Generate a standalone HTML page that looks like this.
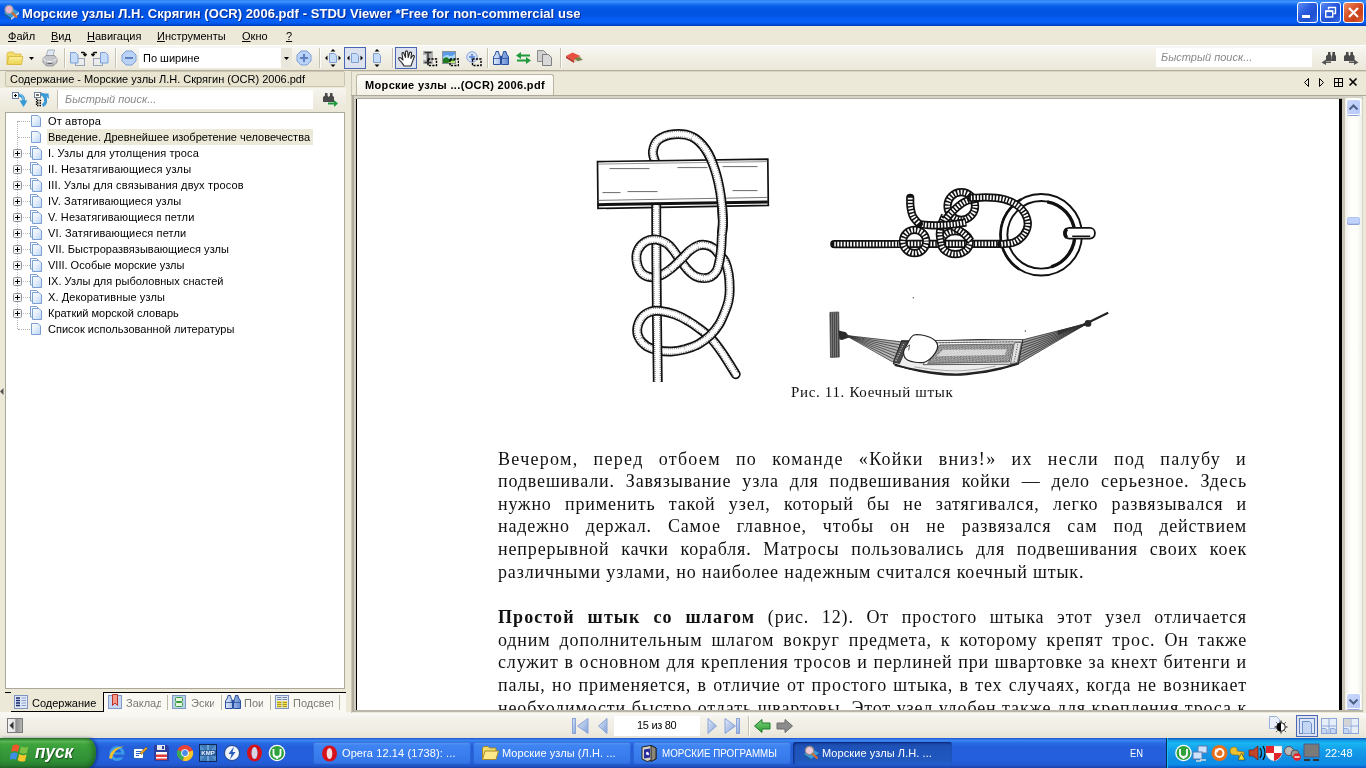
<!DOCTYPE html>
<html lang="ru">
<head>
<meta charset="utf-8">
<title>Морские узлы Л.Н. Скрягин (OCR) 2006.pdf - STDU Viewer</title>
<style>
html,body{margin:0;padding:0;}
body{will-change:transform;width:1366px;height:768px;overflow:hidden;position:relative;background:#ece9d8;font-family:"Liberation Sans",sans-serif;font-size:11px;color:#000;}
.abs{position:absolute;}
.t{position:absolute;white-space:nowrap;line-height:14px;transform-origin:0 50%;}
/* title bar */
#titlebar{left:0;top:0;width:1366px;height:26px;background:linear-gradient(to bottom,#2d7df2 0%,#3f93ff 6%,#2a80f8 12%,#0f66ee 20%,#0458e6 30%,#0052e0 52%,#0459ee 68%,#0862f8 80%,#055cf0 88%,#0148d2 95%,#003cbe 100%);}
#titletext{left:22px;top:6px;letter-spacing:.05px;color:#fff;font-weight:bold;font-size:13px;line-height:16px;text-shadow:1px 1px 0 #0a2a8c;}
.capbtn{position:absolute;top:2px;width:21px;height:21px;border-radius:3px;border:1px solid #fff;box-sizing:border-box;}
/* menu */
#menubar{left:0;top:26px;width:1366px;height:19px;background:#ece9d8;}
.menu{top:29px;}
.menu u{text-decoration:underline;}
/* toolbar */
#toolbar{left:0;top:45px;width:1366px;height:26px;box-sizing:border-box;border-top:1px solid #fff;border-bottom:1px solid #b3af9c;background:linear-gradient(to bottom,#f8f7f2 0%,#f1efe5 50%,#ebe8da 100%);}
.sep{position:absolute;width:1px;background:#c5c2b2;border-right:1px solid #fff;}
.sbtn{width:13px;height:14px;border-radius:2px;background:linear-gradient(to bottom right,#cbd8fc,#b7c8f7);box-shadow:0 0 0 1px #fff, 0 2px 0 #8fa4da;}
#page{font-family:"Liberation Serif",serif;color:#111;}
.ln{position:absolute;left:141px;width:749px;height:22px;line-height:22px;font-size:18px;letter-spacing:.85px;white-space:nowrap;text-align:justify;text-align-last:justify;}
.ln b{letter-spacing:1.1px}
.ln.last{text-align-last:left;width:auto;}
.cap{position:absolute;font-size:15px;line-height:18px;letter-spacing:.66px;white-space:nowrap;}
.tb{top:742px;height:23px;border-radius:3px;background:linear-gradient(to bottom,#5a9bfa 0%,#3f84f2 15%,#3a7eef 50%,#3577e8 85%,#2d6ad8 100%);box-shadow:inset 0 0 0 1px rgba(20,60,170,.35);}
.tb.act{background:linear-gradient(to bottom,#1848a8 0%,#1e52b7 20%,#2058c0 80%,#2460cc 100%);box-shadow:inset 1px 1px 2px rgba(0,10,80,.6);}
.tbt{top:746px;color:#fff;}
/* taskbar */
#taskbar{left:0;top:738px;width:1366px;height:30px;background:linear-gradient(to bottom,#1f55d0 0%,#3b86f0 8%,#2a6de6 16%,#245edb 30%,#2460de 70%,#2259d0 90%,#1a42a8 100%);}
</style>
</head>
<body>
<svg width="0" height="0" style="position:absolute"><defs><linearGradient id="pg" x1="0" y1="0" x2="1" y2="1"><stop offset="0" stop-color="#ffffff"/><stop offset=".45" stop-color="#e4effc"/><stop offset="1" stop-color="#b9d4f4"/></linearGradient></defs></svg>
<!-- TITLE BAR -->
<div id="titlebar" class="abs"></div>
<div id="titletext" class="t">Морские узлы Л.Н. Скрягин (OCR) 2006.pdf - STDU Viewer *Free for non-commercial use</div>

<!-- caption buttons + app icon -->
<svg class="abs" style="left:3px;top:4px" width="17" height="17" viewBox="0 0 17 17"><path d="M1 9l8-5 7 4-8 6z" fill="#3a9ad8"/><path d="M1 9v2l7 5v-2z" fill="#1f5f9a"/><path d="M8 14v2l8-6V8z" fill="#c8d8e8"/><circle cx="6" cy="5.500" r="4" fill="#e8b8d0" stroke="#999" stroke-width="1.200"/><path d="M9 8.500l5 5" stroke="#d86a2a" stroke-width="2.200"/></svg>
<div class="capbtn" style="left:1297px;background:linear-gradient(135deg,#5f8ff5 0%,#2a5ce0 40%,#1f4fd0 70%,#3a6fe8 100%)"></div>
<div class="abs" style="left:1302px;top:15px;width:8px;height:3px;background:#fff"></div>
<div class="capbtn" style="left:1320px;background:linear-gradient(135deg,#5f8ff5 0%,#2a5ce0 40%,#1f4fd0 70%,#3a6fe8 100%)"></div>
<svg class="abs" style="left:1324px;top:6px" width="13" height="13" viewBox="0 0 13 13"><path d="M4.500 3.500v-2h7v6h-2" fill="none" stroke="#fff" stroke-width="1.400"/><rect x="1.700" y="5" width="7" height="6" fill="none" stroke="#fff" stroke-width="1.400"/><path d="M1.700 5.300h7" stroke="#fff" stroke-width="1.600"/></svg>
<div class="capbtn" style="left:1343px;background:linear-gradient(135deg,#f0906a 0%,#d8552a 40%,#c8401a 70%,#e06a3a 100%)"></div>
<svg class="abs" style="left:1348px;top:7px" width="11" height="11" viewBox="0 0 11 11"><path d="M1 1l9 9M10 1l-9 9" stroke="#fff" stroke-width="2.100"/></svg>
<!-- MENU BAR -->
<div id="menubar" class="abs"></div>
<div class="t menu" style="left:8px"><u>Ф</u>айл</div>
<div class="t menu" style="left:51px"><u>В</u>ид</div>
<div class="t menu" style="left:87px"><u>Н</u>авигация</div>
<div class="t menu" style="left:157px"><u>И</u>нструменты</div>
<div class="t menu" style="left:242px"><u>О</u>кно</div>
<div class="t menu" style="left:286px"><u>?</u></div>
<!-- TOOLBAR -->
<div id="toolbar" class="abs"></div>

<!-- toolbar icons -->
<svg class="abs" style="left:6px;top:51px" width="18" height="15" viewBox="0 0 18 15"><defs><linearGradient id="fg" x1="0" y1="0" x2="0" y2="1"><stop offset="0" stop-color="#fbf0a0"/><stop offset="1" stop-color="#ecd24c"/></linearGradient></defs><path d="M1 13.500V3.500Q1 1 3.500 1h3Q8 1 8.500 3h6.500v3" fill="#f2dc6c" stroke="#dcc04a" stroke-width=".9"/><path d="M1 13.500L2.800 5.500h14L15.500 13.500z" fill="url(#fg)" stroke="#d8b93c" stroke-width=".9"/></svg>
<svg class="abs" style="left:29px;top:57px" width="5" height="3" viewBox="0 0 5 3"><path d="M0 0h5L2.500 3z" fill="#000"/></svg>
<svg class="abs" style="left:42px;top:49px" width="16" height="18" viewBox="0 0 16 18"><path d="M4 7.500L6 1h6.500L11 7.500z" fill="#dfe8f4" stroke="#9aa4b4" stroke-width=".8"/><path d="M1 9.500L4 6.500h8.500l2.500 3v4l-4 3.500H4.500L1 13.500z" fill="#c4c6ca" stroke="#8a8c90" stroke-width=".8"/><path d="M1 9.500l3.500 3H11l4-3" fill="none" stroke="#f4f4f4" stroke-width="1"/><path d="M4.500 12.500V17M11 12.500V17" stroke="#8a8c90" stroke-width=".7"/><path d="M5.500 14.500h4.500" stroke="#666" stroke-width="1.200"/></svg>
<div class="sep" style="left:64px;top:48px;height:20px"></div>
<svg class="abs" style="left:69px;top:51px" width="18" height="16" viewBox="0 0 18 16"><rect x="6.500" y="7.500" width="9" height="7" fill="#ececec" stroke="#9aa4b8"/><path d="M1.500 1.500h5l2.500 2.500v8h-7.500z" fill="#c6dcf8" stroke="#7b9fd8"/><path d="M12 1.500h2.500q1.500 0 1.500 1.500v1.500M14.300 3l1.700 1.800 1.700-1.800" fill="none" stroke="#111" stroke-width="1.300"/></svg>
<svg class="abs" style="left:91px;top:51px" width="18" height="16" viewBox="0 0 18 16"><rect x="2.500" y="7.500" width="9" height="7" fill="#ececec" stroke="#9aa4b8"/><path d="M9.500 1.500h5l2.500 2.500v8h-7.500z" fill="#c6dcf8" stroke="#7b9fd8"/><path d="M6 1.500H3.500Q2 1.500 2 3v1.500M3.700 3L2 4.800.3 3" fill="none" stroke="#111" stroke-width="1.300"/></svg>
<div class="sep" style="left:115px;top:48px;height:20px"></div>
<svg class="abs" style="left:121px;top:50px" width="16" height="16" viewBox="0 0 16 16"><path d="M5 1h6l4 4v6l-4 4H5l-4-4V5z" fill="#b9d2f6" stroke="#7d9fd6"/><rect x="4" y="7" width="8" height="2" fill="#5c80c0"/></svg>
<div class="abs" style="left:139px;top:48px;width:142px;height:20px;background:#fff"></div>
<div class="abs" style="left:281px;top:48px;width:11px;height:20px;background:#e9e7dc"></div>
<div class="t" style="left:143px;top:51px">По ширине</div>
<svg class="abs" style="left:284px;top:57px" width="5" height="3" viewBox="0 0 5 3"><path d="M0 0h5L2.500 3z" fill="#000"/></svg>
<svg class="abs" style="left:296px;top:50px" width="16" height="16" viewBox="0 0 16 16"><path d="M5 1h6l4 4v6l-4 4H5l-4-4V5z" fill="#b9d2f6" stroke="#7d9fd6"/><path d="M4 8h8M8 4v8" stroke="#5c80c0" stroke-width="2"/></svg>
<div class="sep" style="left:319px;top:48px;height:20px"></div>
<svg class="abs" style="left:325px;top:49px" width="16" height="18" viewBox="0 0 16 18"><path d="M4.500 4.500h5l2 2v7h-7z" fill="#c6dcf8" stroke="#7fa0d0"/><path d="M8 0l2.500 2.500h-5zM8 18l2.500-2.500h-5zM0 9l2.500-2.500v5zM16 9l-2.500-2.500v5z" fill="#000"/></svg>
<div class="abs" style="left:344px;top:47px;width:22px;height:22px;box-sizing:border-box;border:1px solid #4a66b4;background:#dde3ee"></div>
<svg class="abs" style="left:347px;top:49px" width="16" height="18" viewBox="0 0 16 18"><path d="M4.500 4.500h5l2 2v7h-7z" fill="#c6dcf8" stroke="#7fa0d0"/><path d="M0 9l2.500-2.500v5zM16 9l-2.500-2.500v5z" fill="#000"/></svg>
<svg class="abs" style="left:369px;top:49px" width="16" height="18" viewBox="0 0 16 18"><path d="M4.500 4.500h5l2 2v7h-7z" fill="#c6dcf8" stroke="#7fa0d0"/><path d="M8 0l2.500 2.500h-5zM8 18l2.500-2.500h-5z" fill="#000"/></svg>
<div class="sep" style="left:392px;top:48px;height:20px"></div>
<div class="abs" style="left:395px;top:47px;width:22px;height:22px;box-sizing:border-box;border:1px solid #4a66b4;background:#dde3ee"></div>
<svg class="abs" style="left:398px;top:50px" width="17" height="17" viewBox="0 0 17 17"><path d="M6 16C5 13.500 3 12 1 9.500 0 8 1.500 7 3 8L5 10 4 4C3.800 2.500 5.500 2 6 3.500L7.500 7.500V2C7.500 .5 9.500 .5 9.700 2L10.200 7.500 11.500 3C12 1.500 13.800 2 13.500 3.500L12.800 8.500 14.500 6C15.300 4.800 16.800 5.500 16.200 7 15 10.500 14 12.500 13 16Z" fill="#fff" stroke="#2a2a2a" stroke-width="1.100" stroke-linejoin="round"/></svg>
<svg class="abs" style="left:423px;top:51px" width="15" height="17" viewBox="0 0 15 17"><rect x="0" y="0" width="10" height="13" fill="#b4b4b4"/><rect x="0" y="4" width="3" height="5" fill="#e8e8e8"/><path d="M1.500 1.500h7M1.500 11.500h7M5 1.500v10" stroke="#333" stroke-width="1.400"/><rect x="5" y="8" width="8.500" height="6.500" fill="none" stroke="#000" stroke-dasharray="2.200 1.200" stroke-width="1.400"/></svg>
<svg class="abs" style="left:442px;top:51px" width="17" height="17" viewBox="0 0 17 17"><rect x="0" y="0" width="14" height="13" fill="#8f9396"/><rect x="1" y="1" width="12" height="5" fill="#5a9ae8"/><path d="M1 6q3-3 6-1.500t6-1.500v5H1z" fill="#a8d8f8"/><path d="M1 8q3-3 5.500-.5T13 8v4H1z" fill="#1f7a24"/><path d="M6 12q3-3 7-2v2z" fill="#b8e070"/><rect x="8" y="8" width="8.500" height="6.500" fill="none" stroke="#000" stroke-dasharray="2.200 1.200" stroke-width="1.400"/></svg>
<svg class="abs" style="left:466px;top:51px" width="16" height="17" viewBox="0 0 16 17"><circle cx="6" cy="6" r="5.300" fill="#d4e2fa" stroke="#8aa6dc"/><path d="M3 6h6M6 3v6" stroke="#5a80d0" stroke-width="1.500"/><rect x="6.500" y="8" width="8.500" height="6.500" fill="none" stroke="#000" stroke-dasharray="2.200 1.200" stroke-width="1.400"/></svg>
<div class="sep" style="left:487px;top:48px;height:20px"></div>
<svg class="abs" style="left:493px;top:51px" width="16" height="14" viewBox="0 0 16 14"><defs><linearGradient id="bg2" x1="0" x2="1"><stop offset="0" stop-color="#dfeafc"/><stop offset="1" stop-color="#5f88d0"/></linearGradient></defs><path d="M3 .5h2.500l.5 2.500 1.500 2.500V13.500H.5V6L2.500 3zM10.500 .5H13l.5 2.500 2 2.500V13.500H8.500V6l1.500-3z" fill="url(#bg2)" stroke="#2b4fa0" stroke-width="1"/><path d="M1 7.500h6M9 7.500h6.500" stroke="#2b4fa0" stroke-width=".8"/><rect x="6.500" y="5" width="3" height="3" fill="#2b4fa0"/></svg>
<svg class="abs" style="left:516px;top:52px" width="15" height="12" viewBox="0 0 15 12"><path d="M0 3.500l5-3.500v2.500h9v2H5V7zM15 8.500l-5 3.500V9.500H1v-2h9V5z" fill="#1f9a3c"/></svg>
<svg class="abs" style="left:536px;top:49px" width="17" height="18" viewBox="0 0 17 18"><path d="M1.500 1.500h6l3 3v8h-9z" fill="#d0d0d0" stroke="#8a8a8a"/><path d="M6.500 5.500h6l3 3v8h-9z" fill="#d8d8d8" stroke="#7e7e7e"/></svg>
<div class="sep" style="left:560px;top:48px;height:20px"></div>
<svg class="abs" style="left:565px;top:52px" width="18" height="12" viewBox="0 0 18 12"><path d="M1 4l6.500-3.500 8 3.500L9 8.500z" fill="#e8503f"/><path d="M1 4v2l8 5V8.500z" fill="#b8332a"/><path d="M9 8.500l6.500-4.500v2L9 11z" fill="#d8ceb4"/><path d="M9.500 6.500l5-1.500 3 2.500-5 1.500z" fill="#6b8a4a"/><path d="M12 9l5.500-1.500" stroke="#8a7a5a" stroke-width=".8"/></svg>
<!-- right search -->
<div class="abs" style="left:1156px;top:48px;width:156px;height:19px;background:#fff"></div>
<div class="t" style="left:1161px;top:50px;font-style:italic;color:#8a8a8a">Быстрый поиск...</div>

<!-- toolbar right search icons -->
<svg class="abs" style="left:1321px;top:51px" width="16" height="14" viewBox="0 0 16 14"><path d="M7 1h2.500v2.500l1 1.500v5H5V5l2-1.500zM11.500 1H14v2.500l1 1.500v5h-4.500z" fill="#4a4a4a"/><path d="M10 10.500H5V8.500L.5 11.500 5 14v-2h5z" fill="#555"/></svg>
<svg class="abs" style="left:1343px;top:51px" width="16" height="14" viewBox="0 0 16 14"><path d="M3 1h2.500v2.500l1 1.500v5H1V5l2-1.500zM7.500 1H10v2.500l1.500 1.500v5H6.500V5l1-1.500z" fill="#4a4a4a"/><path d="M6 10.500h5V8.500l4.500 3-4.500 2.500v-2H6z" fill="#555"/></svg>
<!-- LEFT PANEL -->
<div class="abs" style="left:5px;top:71px;width:340px;height:16px;box-sizing:border-box;border:1px solid #c9c5b2;border-radius:2px;background:#e8e4d0"></div>
<div class="t" id="phdr" style="left:10px;top:72px">Содержание - Морские узлы Л.Н. Скрягин (OCR) 2006.pdf</div>
<div class="abs" style="left:0;top:88px;width:346px;height:24px;background:linear-gradient(to bottom,#f5f4ee,#ebe8d8)"></div>
<svg class="abs" style="left:11px;top:91px" width="17" height="17" viewBox="0 0 17 17"><path d="M8 4Q13 4.500 12.500 10.500" fill="none" stroke="#3a9ad8" stroke-width="3.200"/><path d="M8.500 9.500h8L12.500 16z" fill="#3a9ad8"/><path d="M9 3.200Q12.500 4 12 9" fill="none" stroke="#9fd0f0" stroke-width="1"/><rect x="1.500" y="1.500" width="6" height="6" fill="#fff" stroke="#6b7fa0"/><path d="M3 4.500h3M4.500 3v3" stroke="#000" stroke-width="1.100"/></svg>
<svg class="abs" style="left:33px;top:91px" width="17" height="17" viewBox="0 0 17 17"><path d="M8 3Q13.500 4 12.500 11Q12 13.500 9.500 14.500" fill="none" stroke="#3a9ad8" stroke-width="3.200"/><path d="M10.500 2.500l5 0 .5 5.500z" fill="#3a9ad8"/><rect x="1.500" y="1.500" width="6" height="5" fill="#fff" stroke="#6b7fa0"/><path d="M3 4h3" stroke="#000" stroke-width="1.100"/><path d="M3.500 7.500v7M4 9.500h5M4 12h5M4 14.500h5" stroke="#000" stroke-width="1.300" stroke-dasharray="1.500 1"/></svg>
<div class="sep" style="left:57px;top:90px;height:19px"></div>
<div class="abs" style="left:59px;top:90px;width:254px;height:19px;background:#fff"></div>
<div class="t" style="left:65px;top:92px;font-style:italic;color:#8a8a8a">Быстрый поиск...</div>
<svg class="abs" style="left:322px;top:92px" width="17" height="15" viewBox="0 0 17 15"><path d="M3 1h2.500v2.500l1 1.500v5H1V5l2-1.500zM8 1h2.500v2.500l1.500 1.500v5H6.500V5L8 3.500z" fill="#4a4a4a"/><path d="M6 10.500h6V8l4 3.500-4 3.500v-2.500H6z" fill="#1f9a3c"/></svg>
<div class="abs" style="left:5px;top:112px;width:340px;height:577px;box-sizing:border-box;border:1px solid #aca899;background:#fff"></div>
<div class="abs" style="left:17px;top:121px;width:0;height:208px;border-left:1px dotted #b4b4b4"></div>
<div class="abs" style="left:18px;top:121px;width:12px;height:0;border-top:1px dotted #b4b4b4"></div>
<svg class="abs" style="left:31px;top:115px" width="11" height="13" viewBox="0 0 11 13"><path d="M.5 .5h6.500l2.500 2.500v8.500h-9z" fill="url(#pg)" stroke="#7a9fd0"/></svg>
<div class="t tr" style="left:48px;top:114px;letter-spacing:0.156px">От автора</div>
<div class="abs" style="left:18px;top:137px;width:12px;height:0;border-top:1px dotted #b4b4b4"></div>
<svg class="abs" style="left:31px;top:131px" width="11" height="13" viewBox="0 0 11 13"><path d="M.5 .5h6.500l2.500 2.500v8.500h-9z" fill="url(#pg)" stroke="#7a9fd0"/></svg>
<div class="abs" style="left:47px;top:129px;width:266px;height:16px;background:#ece9d8" id="selbg"></div>
<div class="t tr" style="left:48px;top:130px;letter-spacing:0.011px">Введение. Древнейшее изобретение человечества</div>
<div class="abs" style="left:18px;top:153px;width:12px;height:0;border-top:1px dotted #b4b4b4"></div>
<svg class="abs" style="left:13px;top:149px" width="9" height="9" viewBox="0 0 9 9"><rect x=".5" y=".5" width="8" height="8" rx="1" fill="#f4f3ee" stroke="#8a93a3"/><path d="M2 4.500h5M4.500 2v5" stroke="#000"/></svg>
<svg class="abs" style="left:30px;top:146px" width="13" height="14" viewBox="0 0 13 14"><path d="M.5 .5h6l2 2v8.500h-8z" fill="#f4f8fe" stroke="#7a9fd0"/><path d="M2.500 2.500h6.500l2.500 2.500v8.500h-9z" fill="url(#pg)" stroke="#7a9fd0"/></svg>
<div class="t tr" style="left:48px;top:146px;letter-spacing:0.126px">I. Узлы для утолщения троса</div>
<div class="abs" style="left:18px;top:169px;width:12px;height:0;border-top:1px dotted #b4b4b4"></div>
<svg class="abs" style="left:13px;top:165px" width="9" height="9" viewBox="0 0 9 9"><rect x=".5" y=".5" width="8" height="8" rx="1" fill="#f4f3ee" stroke="#8a93a3"/><path d="M2 4.500h5M4.500 2v5" stroke="#000"/></svg>
<svg class="abs" style="left:30px;top:162px" width="13" height="14" viewBox="0 0 13 14"><path d="M.5 .5h6l2 2v8.500h-8z" fill="#f4f8fe" stroke="#7a9fd0"/><path d="M2.500 2.500h6.500l2.500 2.500v8.500h-9z" fill="url(#pg)" stroke="#7a9fd0"/></svg>
<div class="t tr" style="left:48px;top:162px;letter-spacing:0.18px">II. Незатягивающиеся узлы</div>
<div class="abs" style="left:18px;top:185px;width:12px;height:0;border-top:1px dotted #b4b4b4"></div>
<svg class="abs" style="left:13px;top:181px" width="9" height="9" viewBox="0 0 9 9"><rect x=".5" y=".5" width="8" height="8" rx="1" fill="#f4f3ee" stroke="#8a93a3"/><path d="M2 4.500h5M4.500 2v5" stroke="#000"/></svg>
<svg class="abs" style="left:30px;top:178px" width="13" height="14" viewBox="0 0 13 14"><path d="M.5 .5h6l2 2v8.500h-8z" fill="#f4f8fe" stroke="#7a9fd0"/><path d="M2.500 2.500h6.500l2.500 2.500v8.500h-9z" fill="url(#pg)" stroke="#7a9fd0"/></svg>
<div class="t tr" style="left:48px;top:178px;letter-spacing:0.164px">III. Узлы для связывания двух тросов</div>
<div class="abs" style="left:18px;top:201px;width:12px;height:0;border-top:1px dotted #b4b4b4"></div>
<svg class="abs" style="left:13px;top:197px" width="9" height="9" viewBox="0 0 9 9"><rect x=".5" y=".5" width="8" height="8" rx="1" fill="#f4f3ee" stroke="#8a93a3"/><path d="M2 4.500h5M4.500 2v5" stroke="#000"/></svg>
<svg class="abs" style="left:30px;top:194px" width="13" height="14" viewBox="0 0 13 14"><path d="M.5 .5h6l2 2v8.500h-8z" fill="#f4f8fe" stroke="#7a9fd0"/><path d="M2.500 2.500h6.500l2.500 2.500v8.500h-9z" fill="url(#pg)" stroke="#7a9fd0"/></svg>
<div class="t tr" style="left:48px;top:194px;letter-spacing:0.152px">IV. Затягивающиеся узлы</div>
<div class="abs" style="left:18px;top:217px;width:12px;height:0;border-top:1px dotted #b4b4b4"></div>
<svg class="abs" style="left:13px;top:213px" width="9" height="9" viewBox="0 0 9 9"><rect x=".5" y=".5" width="8" height="8" rx="1" fill="#f4f3ee" stroke="#8a93a3"/><path d="M2 4.500h5M4.500 2v5" stroke="#000"/></svg>
<svg class="abs" style="left:30px;top:210px" width="13" height="14" viewBox="0 0 13 14"><path d="M.5 .5h6l2 2v8.500h-8z" fill="#f4f8fe" stroke="#7a9fd0"/><path d="M2.500 2.500h6.500l2.500 2.500v8.500h-9z" fill="url(#pg)" stroke="#7a9fd0"/></svg>
<div class="t tr" style="left:48px;top:210px;letter-spacing:0.124px">V. Незатягивающиеся петли</div>
<div class="abs" style="left:18px;top:233px;width:12px;height:0;border-top:1px dotted #b4b4b4"></div>
<svg class="abs" style="left:13px;top:229px" width="9" height="9" viewBox="0 0 9 9"><rect x=".5" y=".5" width="8" height="8" rx="1" fill="#f4f3ee" stroke="#8a93a3"/><path d="M2 4.500h5M4.500 2v5" stroke="#000"/></svg>
<svg class="abs" style="left:30px;top:226px" width="13" height="14" viewBox="0 0 13 14"><path d="M.5 .5h6l2 2v8.500h-8z" fill="#f4f8fe" stroke="#7a9fd0"/><path d="M2.500 2.500h6.500l2.500 2.500v8.500h-9z" fill="url(#pg)" stroke="#7a9fd0"/></svg>
<div class="t tr" style="left:48px;top:226px;letter-spacing:0.129px">VI. Затягивающиеся петли</div>
<div class="abs" style="left:18px;top:249px;width:12px;height:0;border-top:1px dotted #b4b4b4"></div>
<svg class="abs" style="left:13px;top:245px" width="9" height="9" viewBox="0 0 9 9"><rect x=".5" y=".5" width="8" height="8" rx="1" fill="#f4f3ee" stroke="#8a93a3"/><path d="M2 4.500h5M4.500 2v5" stroke="#000"/></svg>
<svg class="abs" style="left:30px;top:242px" width="13" height="14" viewBox="0 0 13 14"><path d="M.5 .5h6l2 2v8.500h-8z" fill="#f4f8fe" stroke="#7a9fd0"/><path d="M2.500 2.500h6.500l2.500 2.500v8.500h-9z" fill="url(#pg)" stroke="#7a9fd0"/></svg>
<div class="t tr" style="left:48px;top:242px;letter-spacing:0.035px">VII. Быстроразвязывающиеся узлы</div>
<div class="abs" style="left:18px;top:265px;width:12px;height:0;border-top:1px dotted #b4b4b4"></div>
<svg class="abs" style="left:13px;top:261px" width="9" height="9" viewBox="0 0 9 9"><rect x=".5" y=".5" width="8" height="8" rx="1" fill="#f4f3ee" stroke="#8a93a3"/><path d="M2 4.500h5M4.500 2v5" stroke="#000"/></svg>
<svg class="abs" style="left:30px;top:258px" width="13" height="14" viewBox="0 0 13 14"><path d="M.5 .5h6l2 2v8.500h-8z" fill="#f4f8fe" stroke="#7a9fd0"/><path d="M2.500 2.500h6.500l2.500 2.500v8.500h-9z" fill="url(#pg)" stroke="#7a9fd0"/></svg>
<div class="t tr" style="left:48px;top:258px;letter-spacing:-0.004px">VIII. Особые морские узлы</div>
<div class="abs" style="left:18px;top:281px;width:12px;height:0;border-top:1px dotted #b4b4b4"></div>
<svg class="abs" style="left:13px;top:277px" width="9" height="9" viewBox="0 0 9 9"><rect x=".5" y=".5" width="8" height="8" rx="1" fill="#f4f3ee" stroke="#8a93a3"/><path d="M2 4.500h5M4.500 2v5" stroke="#000"/></svg>
<svg class="abs" style="left:30px;top:274px" width="13" height="14" viewBox="0 0 13 14"><path d="M.5 .5h6l2 2v8.500h-8z" fill="#f4f8fe" stroke="#7a9fd0"/><path d="M2.500 2.500h6.500l2.500 2.500v8.500h-9z" fill="url(#pg)" stroke="#7a9fd0"/></svg>
<div class="t tr" style="left:48px;top:274px;letter-spacing:0.026px">IX. Узлы для рыболовных снастей</div>
<div class="abs" style="left:18px;top:297px;width:12px;height:0;border-top:1px dotted #b4b4b4"></div>
<svg class="abs" style="left:13px;top:293px" width="9" height="9" viewBox="0 0 9 9"><rect x=".5" y=".5" width="8" height="8" rx="1" fill="#f4f3ee" stroke="#8a93a3"/><path d="M2 4.500h5M4.500 2v5" stroke="#000"/></svg>
<svg class="abs" style="left:30px;top:290px" width="13" height="14" viewBox="0 0 13 14"><path d="M.5 .5h6l2 2v8.500h-8z" fill="#f4f8fe" stroke="#7a9fd0"/><path d="M2.500 2.500h6.500l2.500 2.500v8.500h-9z" fill="url(#pg)" stroke="#7a9fd0"/></svg>
<div class="t tr" style="left:48px;top:290px;letter-spacing:0.1px">X. Декоративные узлы</div>
<div class="abs" style="left:18px;top:313px;width:12px;height:0;border-top:1px dotted #b4b4b4"></div>
<svg class="abs" style="left:13px;top:309px" width="9" height="9" viewBox="0 0 9 9"><rect x=".5" y=".5" width="8" height="8" rx="1" fill="#f4f3ee" stroke="#8a93a3"/><path d="M2 4.500h5M4.500 2v5" stroke="#000"/></svg>
<svg class="abs" style="left:30px;top:306px" width="13" height="14" viewBox="0 0 13 14"><path d="M.5 .5h6l2 2v8.500h-8z" fill="#f4f8fe" stroke="#7a9fd0"/><path d="M2.500 2.500h6.500l2.500 2.500v8.500h-9z" fill="url(#pg)" stroke="#7a9fd0"/></svg>
<div class="t tr" style="left:48px;top:306px;letter-spacing:-0.009px">Краткий морской словарь</div>
<div class="abs" style="left:18px;top:329px;width:12px;height:0;border-top:1px dotted #b4b4b4"></div>
<svg class="abs" style="left:31px;top:323px" width="11" height="13" viewBox="0 0 11 13"><path d="M.5 .5h6.500l2.500 2.500v8.500h-9z" fill="url(#pg)" stroke="#7a9fd0"/></svg>
<div class="t tr" style="left:48px;top:322px;letter-spacing:0.019px">Список использованной литературы</div>

<!-- left bottom tabs -->
<div class="abs" style="left:104px;top:692px;width:242px;height:20px;background:#f9f8f2"></div>
<div class="abs" style="left:5px;top:692px;width:341px;height:1px;background:#000"></div>
<div class="abs" style="left:11px;top:692px;width:93px;height:20px;box-sizing:border-box;background:#ece9d8;border-right:1px solid #000;border-bottom:1px solid #000"></div>
<svg class="abs" style="left:14px;top:695px" width="14" height="14" viewBox="0 0 14 14"><rect x=".5" y=".5" width="13" height="13" fill="#dfe8f8" stroke="#7f93c0"/><path d="M2 3h4M2 5.500h4M2 8h4M2 10.500h4" stroke="#1a2a6a" stroke-width="1.300"/><path d="M7.500 3h4.500M7.500 5.500h4.500M7.500 8h4.500M7.500 10.500h4.500" stroke="#8aa0cc" stroke-width="1"/></svg>
<div class="t" style="left:32px;top:696px">Содержание</div>
<svg class="abs" style="left:108px;top:694px" width="14" height="15" viewBox="0 0 14 15"><rect x=".5" y="1.500" width="13" height="13" fill="#c8d8f4" stroke="#8098c8"/><path d="M4.500 .5h5v11l-2.500-2.500-2.500 2.500z" fill="#f79a8a" stroke="#b8322a"/></svg>
<div class="t" style="left:126px;top:696px;color:#7a7a72;width:35px;overflow:hidden">Закладки</div>
<div class="abs" style="left:167px;top:695px;width:1px;height:15px;background:#bab7a6"></div>
<svg class="abs" style="left:172px;top:695px" width="14" height="14" viewBox="0 0 14 14"><rect x=".5" y=".5" width="13" height="13" fill="#b8d4ec" stroke="#7f9ac0"/><rect x="3.500" y="2.500" width="7" height="4" rx="1" fill="#e8f8e0" stroke="#3a9a3a"/><rect x="3.500" y="7.500" width="7" height="4" rx="1" fill="#e8f8e0" stroke="#3a9a3a"/></svg>
<div class="t" style="left:191px;top:696px;color:#7a7a72;width:23px;overflow:hidden">Эскизы</div>
<div class="abs" style="left:221px;top:695px;width:1px;height:15px;background:#bab7a6"></div>
<svg class="abs" style="left:225px;top:695px" width="16" height="14" viewBox="0 0 16 14"><path d="M3 .5h2.500l.5 2.500 1.500 2.500V13.500H.5V6L2.500 3zM10.500 .5H13l.5 2.500 2 2.500V13.500H8.500V6l1.500-3z" fill="url(#bg2)" stroke="#2b4fa0" stroke-width="1"/><path d="M1 7.500h6M9 7.500h6.500" stroke="#2b4fa0" stroke-width=".8"/><rect x="6.500" y="5" width="3" height="3" fill="#2b4fa0"/></svg>
<div class="t" style="left:244px;top:696px;color:#7a7a72;width:19px;overflow:hidden">Поиск</div>
<div class="abs" style="left:270px;top:695px;width:1px;height:15px;background:#bab7a6"></div>
<svg class="abs" style="left:275px;top:695px" width="14" height="14" viewBox="0 0 14 14"><rect x=".5" y=".5" width="13" height="13" fill="#dfe8f8" stroke="#7f93c0"/><path d="M2 2.500h10M2 4.500h10" stroke="#7a88a8" stroke-width="1"/><rect x="2" y="6" width="10" height="6.500" fill="#f4e04a"/><path d="M2 7.500h10M2 9.500h10M2 11.500h10" stroke="#8a7a20" stroke-width=".7"/><path d="M7 2v11" stroke="#dfe8f8"/></svg>
<div class="t" style="left:293px;top:696px;color:#7a7a72;width:40px;overflow:hidden">Подсветка</div>
<div class="abs" style="left:339px;top:695px;width:1px;height:15px;background:#bab7a6"></div>
<!-- splitter handle -->
<svg class="abs" style="left:0;top:388px" width="4" height="7" viewBox="0 0 4 7"><path d="M3.500 0L0 3.500 3.500 7z" fill="#555"/></svg>

<!-- DOC AREA -->
<div class="abs" style="left:351px;top:71px;width:1015px;height:643px;box-sizing:border-box;border-left:1px solid #c9c6b5;border-top:1px solid #d8d5c4;background:#ece9d8"></div>
<div class="abs" style="left:356px;top:74px;width:198px;height:23px;box-sizing:border-box;border:1px solid #b9b6a4;border-bottom:none;border-radius:3px 3px 0 0;background:linear-gradient(to bottom,#fdfcf8,#f3f1e6)"></div>
<div class="t" id="tabtxt" style="left:365px;top:78px;font-weight:bold;letter-spacing:.35px">Морские узлы ...(OCR) 2006.pdf</div>
<svg class="abs" style="left:1301px;top:77px" width="60" height="11" viewBox="0 0 60 11"><path d="M7.500 1.500L3.500 5.500 7.500 9.500z" fill="none" stroke="#000"/><path d="M18.500 1.500L22.500 5.500 18.500 9.500z" fill="none" stroke="#000"/><rect x="33.500" y="1.500" width="8" height="8" fill="none" stroke="#000"/><path d="M33.500 5.500h8M37.500 1.500v8" stroke="#000"/><path d="M48.500 1.500l7 7m0-7l-7 7" stroke="#000" stroke-width="1.600"/></svg>
<div class="abs" style="left:351px;top:95px;width:1015px;height:1px;background:#aca899"></div>
<div class="abs" style="left:352px;top:96px;width:1014px;height:616px;background:#d6d3c9"></div>
<div class="abs" style="left:352px;top:96px;width:2px;height:616px;background:#b0ad9e"></div>
<div class="abs" style="left:354px;top:98px;width:1009px;height:1px;background:#aeab9c"></div>
<div class="abs" style="left:354px;top:710px;width:1009px;height:2px;background:#bab7a8"></div>
<div class="abs" style="left:1363px;top:96px;width:3px;height:616px;background:#ece9d8"></div>
<div class="abs" style="left:354px;top:98px;width:3px;height:612px;background:#d0cdbe"></div>
<div class="abs" style="left:356px;top:99px;width:986px;height:611px;background:#000"></div>
<div class="abs" id="page" style="left:357px;top:99px;width:982px;height:611px;background:#fff;overflow:hidden">
<div class="ln" style="top:348.6px;letter-spacing:1.3px">Вечером, перед отбоем по команде «Койки вниз!» их несли под палубу и</div>
<div class="ln" style="top:371.2px">подвешивали. Завязывание узла для подвешивания койки — дело серьезное. Здесь</div>
<div class="ln" style="top:393.8px">нужно применить такой узел, который бы не затягивался, легко развязывался и</div>
<div class="ln" style="top:416.4px">надежно держал. Самое главное, чтобы он не развязался сам под действием</div>
<div class="ln" style="top:439.0px">непрерывной качки корабля. Матросы пользовались для подвешивания своих коек</div>
<div class="ln last" style="top:461.6px">различными узлами, но наиболее надежным считался коечный штык.</div>
<div class="ln" style="top:506.8px"><b>Простой штык со шлагом</b> (рис. 12). От простого штыка этот узел отличается</div>
<div class="ln" style="top:529.6px">одним дополнительным шлагом вокруг предмета, к которому крепят трос. Он также</div>
<div class="ln" style="top:552.4px">служит в основном для крепления тросов и перлиней при швартовке за кнехт битенги и</div>
<div class="ln" style="top:575.1px">палы, но применяется, в отличие от простого штыка, в тех случаях, когда не возникает</div>
<div class="ln" style="top:597.9px">необходимости быстро отдать швартовы. Этот узел удобен также для крепления троса к</div>
<!--FIG--><svg class="abs" style="left:0;top:0" width="981" height="613" viewBox="357 99 981 613"><path d="M655.5 163.0C655.1 161.1 652.4 155.4 652.9 151.5C653.4 147.6 654.9 142.7 658.4 139.8C661.9 136.9 668.5 134.7 674.1 134.2C679.8 133.7 687.0 134.3 692.3 136.9C697.6 139.5 702.0 144.1 705.8 149.6C709.6 155.1 712.4 162.1 714.9 169.7C717.4 177.3 719.4 186.7 720.7 195.2C722.0 203.7 722.7 214.1 722.9 220.7C723.1 227.3 722.2 230.4 721.9 235.0" fill="none" stroke="#111" stroke-width="9.9" stroke-linecap="butt"/><path d="M655.5 163.0C655.1 161.1 652.4 155.4 652.9 151.5C653.4 147.6 654.9 142.7 658.4 139.8C661.9 136.9 668.5 134.7 674.1 134.2C679.8 133.7 687.0 134.3 692.3 136.9C697.6 139.5 702.0 144.1 705.8 149.6C709.6 155.1 712.4 162.1 714.9 169.7C717.4 177.3 719.4 186.7 720.7 195.2C722.0 203.7 722.7 214.1 722.9 220.7C723.1 227.3 722.2 230.4 721.9 235.0" fill="none" stroke="#fff" stroke-width="6.5" stroke-linecap="butt"/><path d="M655.5 163.0C655.1 161.1 652.4 155.4 652.9 151.5C653.4 147.6 654.9 142.7 658.4 139.8C661.9 136.9 668.5 134.7 674.1 134.2C679.8 133.7 687.0 134.3 692.3 136.9C697.6 139.5 702.0 144.1 705.8 149.6C709.6 155.1 712.4 162.1 714.9 169.7C717.4 177.3 719.4 186.7 720.7 195.2C722.0 203.7 722.7 214.1 722.9 220.7C723.1 227.3 722.2 230.4 721.9 235.0" fill="none" stroke="#444" stroke-width="6.5" stroke-dasharray=".55 1.45"/><path d="M655.5 163.0C655.1 161.1 652.4 155.4 652.9 151.5C653.4 147.6 654.9 142.7 658.4 139.8C661.9 136.9 668.5 134.7 674.1 134.2C679.8 133.7 687.0 134.3 692.3 136.9C697.6 139.5 702.0 144.1 705.8 149.6C709.6 155.1 712.4 162.1 714.9 169.7C717.4 177.3 719.4 186.7 720.7 195.2C722.0 203.7 722.7 214.1 722.9 220.7C723.1 227.3 722.2 230.4 721.9 235.0" fill="none" stroke="#fff" stroke-width="3.9" stroke-linecap="butt"/><path d="M597.5 161.6L767.8 159.1L768.3 205.4L598.0 208.4Z" fill="#fff" stroke="#111" stroke-width="1.7"/><path d="M597.5 204.7L767.8 201.9" stroke="#111" stroke-width="3"/><path d="M597.5 200.4L767.8 197.4" stroke="#555" stroke-width=".8"/><path d="M597.5 164.1L767.8 161.6" stroke="#666" stroke-width=".7"/><path d="M609.5 168.6h40M677.5 167.6h30M722.5 166.6h35M602.5 192.6h18M627.5 191.6h30M732.5 190.6h25" stroke="#444" stroke-width=".8"/><path d="M692.3 136.9C697.6 139.5 702.0 144.1 705.8 149.6C709.6 155.1 712.4 162.1 714.9 169.7C717.4 177.3 719.4 186.7 720.7 195.2C722.0 203.7 722.7 214.1 722.9 220.7C723.1 227.3 722.2 230.4 721.9 235.0" fill="none" stroke="#111" stroke-width="9.9" stroke-linecap="butt"/><path d="M692.3 136.9C697.6 139.5 702.0 144.1 705.8 149.6C709.6 155.1 712.4 162.1 714.9 169.7C717.4 177.3 719.4 186.7 720.7 195.2C722.0 203.7 722.7 214.1 722.9 220.7C723.1 227.3 722.2 230.4 721.9 235.0" fill="none" stroke="#fff" stroke-width="6.5" stroke-linecap="butt"/><path d="M692.3 136.9C697.6 139.5 702.0 144.1 705.8 149.6C709.6 155.1 712.4 162.1 714.9 169.7C717.4 177.3 719.4 186.7 720.7 195.2C722.0 203.7 722.7 214.1 722.9 220.7C723.1 227.3 722.2 230.4 721.9 235.0" fill="none" stroke="#444" stroke-width="6.5" stroke-dasharray=".55 1.45"/><path d="M692.3 136.9C697.6 139.5 702.0 144.1 705.8 149.6C709.6 155.1 712.4 162.1 714.9 169.7C717.4 177.3 719.4 186.7 720.7 195.2C722.0 203.7 722.7 214.1 722.9 220.7C723.1 227.3 722.2 230.4 721.9 235.0" fill="none" stroke="#fff" stroke-width="3.9" stroke-linecap="butt"/><path d="M703.1 278.1C700.5 277.9 697.4 277.2 694.8 275.8C692.2 274.4 689.9 272.2 687.5 269.6C685.1 267.0 682.6 263.5 680.2 260.2C677.8 256.9 675.1 252.6 672.9 249.8C670.6 247.0 669.5 245.2 666.7 243.5" fill="none" stroke="#111" stroke-width="9.9" stroke-linecap="butt"/><path d="M703.1 278.1C700.5 277.9 697.4 277.2 694.8 275.8C692.2 274.4 689.9 272.2 687.5 269.6C685.1 267.0 682.6 263.5 680.2 260.2C677.8 256.9 675.1 252.6 672.9 249.8C670.6 247.0 669.5 245.2 666.7 243.5" fill="none" stroke="#fff" stroke-width="6.5" stroke-linecap="butt"/><path d="M703.1 278.1C700.5 277.9 697.4 277.2 694.8 275.8C692.2 274.4 689.9 272.2 687.5 269.6C685.1 267.0 682.6 263.5 680.2 260.2C677.8 256.9 675.1 252.6 672.9 249.8C670.6 247.0 669.5 245.2 666.7 243.5" fill="none" stroke="#444" stroke-width="6.5" stroke-dasharray=".55 1.45"/><path d="M703.1 278.1C700.5 277.9 697.4 277.2 694.8 275.8C692.2 274.4 689.9 272.2 687.5 269.6C685.1 267.0 682.6 263.5 680.2 260.2C677.8 256.9 675.1 252.6 672.9 249.8C670.6 247.0 669.5 245.2 666.7 243.5" fill="none" stroke="#fff" stroke-width="3.9" stroke-linecap="butt"/><path d="M636.5 260.2C636.9 263.8 638.5 268.9 640.6 271.7C642.7 274.5 645.9 276.2 649.0 276.9C652.1 277.6 655.9 277.0 659.4 275.8C662.9 274.6 666.3 272.2 669.8 269.6" fill="none" stroke="#111" stroke-width="9.9" stroke-linecap="butt"/><path d="M636.5 260.2C636.9 263.8 638.5 268.9 640.6 271.7C642.7 274.5 645.9 276.2 649.0 276.9C652.1 277.6 655.9 277.0 659.4 275.8C662.9 274.6 666.3 272.2 669.8 269.6" fill="none" stroke="#fff" stroke-width="6.5" stroke-linecap="butt"/><path d="M636.5 260.2C636.9 263.8 638.5 268.9 640.6 271.7C642.7 274.5 645.9 276.2 649.0 276.9C652.1 277.6 655.9 277.0 659.4 275.8C662.9 274.6 666.3 272.2 669.8 269.6" fill="none" stroke="#444" stroke-width="6.5" stroke-dasharray=".55 1.45"/><path d="M636.5 260.2C636.9 263.8 638.5 268.9 640.6 271.7C642.7 274.5 645.9 276.2 649.0 276.9C652.1 277.6 655.9 277.0 659.4 275.8C662.9 274.6 666.3 272.2 669.8 269.6" fill="none" stroke="#fff" stroke-width="3.9" stroke-linecap="butt"/><path d="M697.9 245.6C700.7 244.6 703.7 244.7 706.3 245.1C708.9 245.5 711.4 246.7 713.5 248.2C715.6 249.7 716.9 251.8 718.8 254.0C720.7 256.2 723.4 258.0 725.0 261.3" fill="none" stroke="#111" stroke-width="9.9" stroke-linecap="butt"/><path d="M697.9 245.6C700.7 244.6 703.7 244.7 706.3 245.1C708.9 245.5 711.4 246.7 713.5 248.2C715.6 249.7 716.9 251.8 718.8 254.0C720.7 256.2 723.4 258.0 725.0 261.3" fill="none" stroke="#fff" stroke-width="6.5" stroke-linecap="butt"/><path d="M697.9 245.6C700.7 244.6 703.7 244.7 706.3 245.1C708.9 245.5 711.4 246.7 713.5 248.2C715.6 249.7 716.9 251.8 718.8 254.0C720.7 256.2 723.4 258.0 725.0 261.3" fill="none" stroke="#444" stroke-width="6.5" stroke-dasharray=".55 1.45"/><path d="M697.9 245.6C700.7 244.6 703.7 244.7 706.3 245.1C708.9 245.5 711.4 246.7 713.5 248.2C715.6 249.7 716.9 251.8 718.8 254.0C720.7 256.2 723.4 258.0 725.0 261.3" fill="none" stroke="#fff" stroke-width="3.9" stroke-linecap="butt"/><path d="M684.8 349.3C680.4 350.5 675.9 351.3 671.5 351.5C667.1 351.7 662.3 351.2 658.2 350.4C654.1 349.6 650.2 348.4 647.1 346.5C644.0 344.6 641.0 341.6 639.4 338.7" fill="none" stroke="#111" stroke-width="9.9" stroke-linecap="butt"/><path d="M684.8 349.3C680.4 350.5 675.9 351.3 671.5 351.5C667.1 351.7 662.3 351.2 658.2 350.4C654.1 349.6 650.2 348.4 647.1 346.5C644.0 344.6 641.0 341.6 639.4 338.7" fill="none" stroke="#fff" stroke-width="6.5" stroke-linecap="butt"/><path d="M684.8 349.3C680.4 350.5 675.9 351.3 671.5 351.5C667.1 351.7 662.3 351.2 658.2 350.4C654.1 349.6 650.2 348.4 647.1 346.5C644.0 344.6 641.0 341.6 639.4 338.7" fill="none" stroke="#444" stroke-width="6.5" stroke-dasharray=".55 1.45"/><path d="M684.8 349.3C680.4 350.5 675.9 351.3 671.5 351.5C667.1 351.7 662.3 351.2 658.2 350.4C654.1 349.6 650.2 348.4 647.1 346.5C644.0 344.6 641.0 341.6 639.4 338.7" fill="none" stroke="#fff" stroke-width="3.9" stroke-linecap="butt"/><path d="M688.1 321.0C692.4 323.5 696.4 326.4 700.3 329.3C704.2 332.2 707.6 334.7 711.3 338.7C715.0 342.7 718.3 347.2 722.4 353.1C726.5 359.0 733.5 370.7 735.7 374.2" fill="none" stroke="#111" stroke-width="9.9" stroke-linecap="round"/><path d="M688.1 321.0C692.4 323.5 696.4 326.4 700.3 329.3C704.2 332.2 707.6 334.7 711.3 338.7C715.0 342.7 718.3 347.2 722.4 353.1C726.5 359.0 733.5 370.7 735.7 374.2" fill="none" stroke="#fff" stroke-width="6.5" stroke-linecap="round"/><path d="M688.1 321.0C692.4 323.5 696.4 326.4 700.3 329.3C704.2 332.2 707.6 334.7 711.3 338.7C715.0 342.7 718.3 347.2 722.4 353.1C726.5 359.0 733.5 370.7 735.7 374.2" fill="none" stroke="#444" stroke-width="6.5" stroke-dasharray=".55 1.45"/><path d="M688.1 321.0C692.4 323.5 696.4 326.4 700.3 329.3C704.2 332.2 707.6 334.7 711.3 338.7C715.0 342.7 718.3 347.2 722.4 353.1C726.5 359.0 733.5 370.7 735.7 374.2" fill="none" stroke="#fff" stroke-width="3.9" stroke-linecap="round"/><path d="M656.2 205.0C656.2 214.2 656.3 240.8 656.4 260.0C656.5 279.2 656.8 299.7 657.0 320.0C657.2 340.3 657.7 371.7 657.8 382.0" fill="none" stroke="#111" stroke-width="9.9" stroke-linecap="butt"/><path d="M656.2 205.0C656.2 214.2 656.3 240.8 656.4 260.0C656.5 279.2 656.8 299.7 657.0 320.0C657.2 340.3 657.7 371.7 657.8 382.0" fill="none" stroke="#fff" stroke-width="6.5" stroke-linecap="butt"/><path d="M656.2 205.0C656.2 214.2 656.3 240.8 656.4 260.0C656.5 279.2 656.8 299.7 657.0 320.0C657.2 340.3 657.7 371.7 657.8 382.0" fill="none" stroke="#444" stroke-width="6.5" stroke-dasharray=".55 1.45"/><path d="M656.2 205.0C656.2 214.2 656.3 240.8 656.4 260.0C656.5 279.2 656.8 299.7 657.0 320.0C657.2 340.3 657.7 371.7 657.8 382.0" fill="none" stroke="#fff" stroke-width="3.9" stroke-linecap="butt"/><path d="M725.0 261.3C726.6 264.6 727.8 269.0 728.6 273.8C729.4 278.6 729.7 285.5 729.7 290.0C729.7 294.5 729.2 297.5 728.5 301.0C727.8 304.5 726.8 307.2 725.2 311.1C723.6 315.0 721.6 320.3 719.1 324.4C716.6 328.4 713.7 332.1 710.2 335.4C706.7 338.7 702.3 342.0 698.1 344.3C693.9 346.6 689.2 348.1 684.8 349.3" fill="none" stroke="#111" stroke-width="9.9" stroke-linecap="butt"/><path d="M725.0 261.3C726.6 264.6 727.8 269.0 728.6 273.8C729.4 278.6 729.7 285.5 729.7 290.0C729.7 294.5 729.2 297.5 728.5 301.0C727.8 304.5 726.8 307.2 725.2 311.1C723.6 315.0 721.6 320.3 719.1 324.4C716.6 328.4 713.7 332.1 710.2 335.4C706.7 338.7 702.3 342.0 698.1 344.3C693.9 346.6 689.2 348.1 684.8 349.3" fill="none" stroke="#fff" stroke-width="6.5" stroke-linecap="butt"/><path d="M725.0 261.3C726.6 264.6 727.8 269.0 728.6 273.8C729.4 278.6 729.7 285.5 729.7 290.0C729.7 294.5 729.2 297.5 728.5 301.0C727.8 304.5 726.8 307.2 725.2 311.1C723.6 315.0 721.6 320.3 719.1 324.4C716.6 328.4 713.7 332.1 710.2 335.4C706.7 338.7 702.3 342.0 698.1 344.3C693.9 346.6 689.2 348.1 684.8 349.3" fill="none" stroke="#444" stroke-width="6.5" stroke-dasharray=".55 1.45"/><path d="M725.0 261.3C726.6 264.6 727.8 269.0 728.6 273.8C729.4 278.6 729.7 285.5 729.7 290.0C729.7 294.5 729.2 297.5 728.5 301.0C727.8 304.5 726.8 307.2 725.2 311.1C723.6 315.0 721.6 320.3 719.1 324.4C716.6 328.4 713.7 332.1 710.2 335.4C706.7 338.7 702.3 342.0 698.1 344.3C693.9 346.6 689.2 348.1 684.8 349.3" fill="none" stroke="#fff" stroke-width="3.9" stroke-linecap="butt"/><path d="M721.9 235.0C721.6 239.6 721.6 244.0 721.2 248.0C720.9 252.0 720.5 255.4 719.8 259.2C719.0 263.0 718.3 267.7 716.7 270.6C715.1 273.6 712.7 275.6 710.4 276.9C708.1 278.1 705.7 278.3 703.1 278.1" fill="none" stroke="#111" stroke-width="9.9" stroke-linecap="butt"/><path d="M721.9 235.0C721.6 239.6 721.6 244.0 721.2 248.0C720.9 252.0 720.5 255.4 719.8 259.2C719.0 263.0 718.3 267.7 716.7 270.6C715.1 273.6 712.7 275.6 710.4 276.9C708.1 278.1 705.7 278.3 703.1 278.1" fill="none" stroke="#fff" stroke-width="6.5" stroke-linecap="butt"/><path d="M721.9 235.0C721.6 239.6 721.6 244.0 721.2 248.0C720.9 252.0 720.5 255.4 719.8 259.2C719.0 263.0 718.3 267.7 716.7 270.6C715.1 273.6 712.7 275.6 710.4 276.9C708.1 278.1 705.7 278.3 703.1 278.1" fill="none" stroke="#444" stroke-width="6.5" stroke-dasharray=".55 1.45"/><path d="M721.9 235.0C721.6 239.6 721.6 244.0 721.2 248.0C720.9 252.0 720.5 255.4 719.8 259.2C719.0 263.0 718.3 267.7 716.7 270.6C715.1 273.6 712.7 275.6 710.4 276.9C708.1 278.1 705.7 278.3 703.1 278.1" fill="none" stroke="#fff" stroke-width="3.9" stroke-linecap="butt"/><path d="M666.7 243.5C663.9 241.8 659.8 239.9 656.3 239.6C652.8 239.3 648.8 239.8 645.8 241.5C642.8 243.2 639.5 246.7 638.0 249.8C636.5 252.9 636.1 256.6 636.5 260.2" fill="none" stroke="#111" stroke-width="9.9" stroke-linecap="butt"/><path d="M666.7 243.5C663.9 241.8 659.8 239.9 656.3 239.6C652.8 239.3 648.8 239.8 645.8 241.5C642.8 243.2 639.5 246.7 638.0 249.8C636.5 252.9 636.1 256.6 636.5 260.2" fill="none" stroke="#fff" stroke-width="6.5" stroke-linecap="butt"/><path d="M666.7 243.5C663.9 241.8 659.8 239.9 656.3 239.6C652.8 239.3 648.8 239.8 645.8 241.5C642.8 243.2 639.5 246.7 638.0 249.8C636.5 252.9 636.1 256.6 636.5 260.2" fill="none" stroke="#444" stroke-width="6.5" stroke-dasharray=".55 1.45"/><path d="M666.7 243.5C663.9 241.8 659.8 239.9 656.3 239.6C652.8 239.3 648.8 239.8 645.8 241.5C642.8 243.2 639.5 246.7 638.0 249.8C636.5 252.9 636.1 256.6 636.5 260.2" fill="none" stroke="#fff" stroke-width="3.9" stroke-linecap="butt"/><path d="M669.8 269.6C673.3 267.0 676.9 263.3 680.2 260.2C683.5 257.1 686.7 253.2 689.6 250.8C692.5 248.4 695.1 246.6 697.9 245.6" fill="none" stroke="#111" stroke-width="9.9" stroke-linecap="butt"/><path d="M669.8 269.6C673.3 267.0 676.9 263.3 680.2 260.2C683.5 257.1 686.7 253.2 689.6 250.8C692.5 248.4 695.1 246.6 697.9 245.6" fill="none" stroke="#fff" stroke-width="6.5" stroke-linecap="butt"/><path d="M669.8 269.6C673.3 267.0 676.9 263.3 680.2 260.2C683.5 257.1 686.7 253.2 689.6 250.8C692.5 248.4 695.1 246.6 697.9 245.6" fill="none" stroke="#444" stroke-width="6.5" stroke-dasharray=".55 1.45"/><path d="M669.8 269.6C673.3 267.0 676.9 263.3 680.2 260.2C683.5 257.1 686.7 253.2 689.6 250.8C692.5 248.4 695.1 246.6 697.9 245.6" fill="none" stroke="#fff" stroke-width="3.9" stroke-linecap="butt"/><path d="M639.4 338.7C637.8 335.8 636.8 332.3 637.2 328.8C637.6 325.3 639.4 320.6 641.6 317.7C643.8 314.8 647.2 312.7 650.5 311.6C653.8 310.5 657.5 310.6 661.5 311.1C665.5 311.6 670.4 312.8 674.8 314.4C679.2 316.0 683.9 318.5 688.1 321.0" fill="none" stroke="#111" stroke-width="9.9" stroke-linecap="butt"/><path d="M639.4 338.7C637.8 335.8 636.8 332.3 637.2 328.8C637.6 325.3 639.4 320.6 641.6 317.7C643.8 314.8 647.2 312.7 650.5 311.6C653.8 310.5 657.5 310.6 661.5 311.1C665.5 311.6 670.4 312.8 674.8 314.4C679.2 316.0 683.9 318.5 688.1 321.0" fill="none" stroke="#fff" stroke-width="6.5" stroke-linecap="butt"/><path d="M639.4 338.7C637.8 335.8 636.8 332.3 637.2 328.8C637.6 325.3 639.4 320.6 641.6 317.7C643.8 314.8 647.2 312.7 650.5 311.6C653.8 310.5 657.5 310.6 661.5 311.1C665.5 311.6 670.4 312.8 674.8 314.4C679.2 316.0 683.9 318.5 688.1 321.0" fill="none" stroke="#444" stroke-width="6.5" stroke-dasharray=".55 1.45"/><path d="M639.4 338.7C637.8 335.8 636.8 332.3 637.2 328.8C637.6 325.3 639.4 320.6 641.6 317.7C643.8 314.8 647.2 312.7 650.5 311.6C653.8 310.5 657.5 310.6 661.5 311.1C665.5 311.6 670.4 312.8 674.8 314.4C679.2 316.0 683.9 318.5 688.1 321.0" fill="none" stroke="#fff" stroke-width="3.9" stroke-linecap="butt"/><path d="M834.3 244.2C845.2 244.2 879.0 244.1 900.0 244.0C921.0 243.9 943.0 243.8 960.0 243.8C977.0 243.8 995.0 243.8 1002.0 243.8" fill="none" stroke="#111" stroke-width="8.2" stroke-linecap="round"/><path d="M834.3 244.2C845.2 244.2 879.0 244.1 900.0 244.0C921.0 243.9 943.0 243.8 960.0 243.8C977.0 243.8 995.0 243.8 1002.0 243.8" fill="none" stroke="#fff" stroke-width="4.799999999999999" stroke-dasharray="1.7 1.5"/><ellipse cx="914.6" cy="241.5" rx="11.7" ry="11.7" fill="none" stroke="#111" stroke-width="8.2" stroke-linecap="round"/><ellipse cx="914.6" cy="241.5" rx="11.7" ry="11.7" fill="none" stroke="#fff" stroke-width="4.799999999999999" stroke-dasharray="1.7 1.5"/><ellipse cx="955.4" cy="242.7" rx="14.3" ry="11.5" fill="none" stroke="#111" stroke-width="8.2" stroke-linecap="round"/><ellipse cx="955.4" cy="242.7" rx="14.3" ry="11.5" fill="none" stroke="#fff" stroke-width="4.799999999999999" stroke-dasharray="1.7 1.5"/><path d="M945.1 215.2C944.5 216.7 942.2 221.4 941.3 224.5C940.5 227.7 939.8 230.8 939.8 233.9C939.8 237.0 940.9 241.7 941.1 243.3" fill="none" stroke="#111" stroke-width="8.2" stroke-linecap="butt"/><path d="M945.1 215.2C944.5 216.7 942.2 221.4 941.3 224.5C940.5 227.7 939.8 230.8 939.8 233.9C939.8 237.0 940.9 241.7 941.1 243.3" fill="none" stroke="#fff" stroke-width="4.799999999999999" stroke-dasharray="1.7 1.5"/><ellipse cx="961.3" cy="206.0" rx="13.8" ry="13.8" fill="none" stroke="#111" stroke-width="8.2" stroke-linecap="round"/><ellipse cx="961.3" cy="206.0" rx="13.8" ry="13.8" fill="none" stroke="#fff" stroke-width="4.799999999999999" stroke-dasharray="1.7 1.5"/><path d="M953.9 226.9C955.3 227.9 959.8 230.4 962.7 232.7C965.5 235.1 969.7 239.8 971.1 241.2" fill="none" stroke="#111" stroke-width="8.2" stroke-linecap="butt"/><path d="M953.9 226.9C955.3 227.9 959.8 230.4 962.7 232.7C965.5 235.1 969.7 239.8 971.1 241.2" fill="none" stroke="#fff" stroke-width="4.799999999999999" stroke-dasharray="1.7 1.5"/><path d="M944.8 220.4C946.3 218.8 949.9 213.8 953.3 210.7C956.6 207.6 960.7 203.9 965.0 201.7C969.3 199.5 976.7 198.3 979.1 197.6" fill="none" stroke="#111" stroke-width="8.2" stroke-linecap="butt"/><path d="M944.8 220.4C946.3 218.8 949.9 213.8 953.3 210.7C956.6 207.6 960.7 203.9 965.0 201.7C969.3 199.5 976.7 198.3 979.1 197.6" fill="none" stroke="#fff" stroke-width="4.799999999999999" stroke-dasharray="1.7 1.5"/><path d="M918.7 224.1C920.4 224.3 924.7 225.0 928.7 225.2C932.7 225.4 938.2 225.4 942.7 225.2C947.2 225.0 951.7 224.5 955.6 224.1C959.5 223.6 964.4 222.7 966.2 222.4" fill="none" stroke="#111" stroke-width="8.2" stroke-linecap="butt"/><path d="M918.7 224.1C920.4 224.3 924.7 225.0 928.7 225.2C932.7 225.4 938.2 225.4 942.7 225.2C947.2 225.0 951.7 224.5 955.6 224.1C959.5 223.6 964.4 222.7 966.2 222.4" fill="none" stroke="#fff" stroke-width="4.799999999999999" stroke-dasharray="1.7 1.5"/><path d="M910.2 197.8C910.2 199.3 910.1 203.9 910.5 207.0C911.0 210.0 911.5 213.6 912.9 216.3C914.2 219.1 917.7 222.4 918.7 223.6" fill="none" stroke="#111" stroke-width="8.2" stroke-linecap="round"/><path d="M910.2 197.8C910.2 199.3 910.1 203.9 910.5 207.0C911.0 210.0 911.5 213.6 912.9 216.3C914.2 219.1 917.7 222.4 918.7 223.6" fill="none" stroke="#fff" stroke-width="4.799999999999999" stroke-dasharray="1.7 1.5"/><circle cx="1041.2" cy="234.8" r="37.3" fill="none" stroke="#111" stroke-width="8.8"/><circle cx="1041.2" cy="234.8" r="37.3" fill="none" stroke="#fff" stroke-width="5"/><path d="M1047.2 201.8A33.500 33.500 0 0 1 1051.2 266.8" fill="none" stroke="#111" stroke-width="3.4"/><path d="M1021.2 199.3A41 41 0 0 0 1019.2 269.3" fill="none" stroke="#111" stroke-width="2.6"/><path d="M1001.3 244.2C1003.5 243.9 1010.5 243.9 1014.2 242.3C1017.9 240.8 1021.3 238.0 1023.6 235.1C1025.9 232.1 1027.6 228.1 1027.8 224.5C1028.0 220.9 1026.6 216.7 1024.8 213.4C1022.9 210.1 1019.9 207.2 1016.6 204.8C1013.2 202.5 1009.1 200.7 1004.8 199.5C1000.6 198.2 995.1 197.9 990.8 197.6C986.5 197.3 982.4 197.5 979.1 197.6C975.7 197.6 972.2 197.8 970.9 197.8" fill="none" stroke="#111" stroke-width="8.2" stroke-linecap="round"/><path d="M1001.3 244.2C1003.5 243.9 1010.5 243.9 1014.2 242.3C1017.9 240.8 1021.3 238.0 1023.6 235.1C1025.9 232.1 1027.6 228.1 1027.8 224.5C1028.0 220.9 1026.6 216.7 1024.8 213.4C1022.9 210.1 1019.9 207.2 1016.6 204.8C1013.2 202.5 1009.1 200.7 1004.8 199.5C1000.6 198.2 995.1 197.9 990.8 197.6C986.5 197.3 982.4 197.5 979.1 197.6C975.7 197.6 972.2 197.8 970.9 197.8" fill="none" stroke="#fff" stroke-width="4.799999999999999" stroke-dasharray="1.7 1.5"/><rect x="1064.2" y="227.8" width="30.7" height="10.8" rx="5" fill="#fff" stroke="#111" stroke-width="1.8"/><path d="M1066.7 228.8q-3.500 4.500 0 8.8" stroke="#111" stroke-width="3.6" fill="none"/><path d="M1072.2 236.3h18" stroke="#111" stroke-width="1.600"/><defs><pattern id="hx" width="3" height="2.4" patternUnits="userSpaceOnUse" patternTransform="rotate(-8)"><rect width="3" height="2.4" fill="#b9b9b9"/><path d="M0 .6h1.800M1.200 1.800h1.600" stroke="#3a3a3a" stroke-width=".7"/></pattern><pattern id="hw" width="2" height="3" patternUnits="userSpaceOnUse"><rect width="2" height="3" fill="#777"/><path d="M.5 0v3" stroke="#3c3c3c" stroke-width=".8"/></pattern></defs><path d="M829.9 312.4L838.7 312.0L839.3 357.0L830.5 357.4Z" fill="url(#hw)" stroke="#444" stroke-width="0.8"/><path d="M838.7 330.6L845.9 332.2L849.7 337.2L842.0 340.1L839.3 339.4Z" fill="#2a2a2a" stroke="none" stroke-width="0"/><path d="M846.4 335.0L901.7 341.4L897.3 352.6L892.5 362.0Z" fill="rgba(80,80,80,.42)" stroke="none" stroke-width="0"/><path d="M845.9 335.5L900.8 341.8" fill="none" stroke="#333" stroke-width="0.75"/><path d="M845.9 335.5L899.6 344.7" fill="none" stroke="#333" stroke-width="0.75"/><path d="M845.9 335.5L898.4 347.5" fill="none" stroke="#333" stroke-width="0.75"/><path d="M845.9 335.5L897.2 350.4" fill="none" stroke="#333" stroke-width="0.75"/><path d="M845.9 335.5L896.0 353.3" fill="none" stroke="#333" stroke-width="0.75"/><path d="M845.9 335.5L894.8 356.1" fill="none" stroke="#333" stroke-width="0.75"/><path d="M845.9 335.5L893.6 359.0" fill="none" stroke="#333" stroke-width="0.75"/><path d="M845.9 335.5L892.4 361.8" fill="none" stroke="#333" stroke-width="0.75"/><path d="M1087.5 322.9L1021.6 340.1L1019.9 352.6L1018.1 364.2Z" fill="rgba(60,60,60,.5)" stroke="none" stroke-width="0"/><path d="M1087.5 323.4L1021.6 340.1" fill="none" stroke="#2a2a2a" stroke-width="0.75"/><path d="M1087.5 323.4L1021.2 343.0" fill="none" stroke="#2a2a2a" stroke-width="0.75"/><path d="M1087.5 323.4L1020.7 346.0" fill="none" stroke="#2a2a2a" stroke-width="0.75"/><path d="M1087.5 323.4L1020.3 349.0" fill="none" stroke="#2a2a2a" stroke-width="0.75"/><path d="M1087.5 323.4L1019.9 351.9" fill="none" stroke="#2a2a2a" stroke-width="0.75"/><path d="M1087.5 323.4L1019.4 354.9" fill="none" stroke="#2a2a2a" stroke-width="0.75"/><path d="M1087.5 323.4L1019.0 357.9" fill="none" stroke="#2a2a2a" stroke-width="0.75"/><path d="M1087.5 323.4L1018.6 360.8" fill="none" stroke="#2a2a2a" stroke-width="0.75"/><path d="M1087.5 323.4L1018.1 363.8" fill="none" stroke="#2a2a2a" stroke-width="0.75"/><path d="M1087.5 322.5L1057.2 330.9L1058.3 335.0Z" fill="#333" stroke="none" stroke-width="0"/><path d="M1083.6 324.7L1108.2 312.8" fill="none" stroke="#222" stroke-width="2.2"/><circle cx="1088.0" cy="323.4" r="3.400" fill="#2a2a2a"/><path d="M901.7 341.0L943.0 341.0L982.5 339.6L1022.5 340.1L1018.1 364.2C1015.5 365.0 1008.2 367.2 1002.3 368.6C996.4 370.0 990.2 371.5 982.5 372.6C974.8 373.7 965.0 375.1 956.2 375.2C947.4 375.3 937.9 374.1 929.8 373.0C921.8 371.9 913.9 370.2 907.9 368.6C901.8 367.1 896.0 364.4 893.6 363.6Z" fill="#ededed" stroke="#222" stroke-width="1.300"/><path d="M934.2 340.5L1022.5 339.6L1017.7 364.2L923.2 364.7Z" fill="#f4f4f4" stroke="#333" stroke-width="0.8"/><path d="M939.7 344.9L1013.3 344.0L1009.3 362.0L927.6 363.4Z" fill="url(#hx)" stroke="#333" stroke-width="0.6"/><path d="M943.0 349.7L1006.7 349.3L1004.9 355.0L936.4 356.3Z" fill="rgba(235,235,235,.75)" stroke="none" stroke-width="0"/><path d="M936.4 342.7L1021.0 341.8" fill="none" stroke="#555" stroke-width="0.7"/><path d="M1014.4 342.7L1021.6 342.3L1017.2 362.9L1010.6 363.4Z" fill="#e2e2e2" stroke="#333" stroke-width="0.7"/><path d="M1017.7 344.5L1014.2 361.6" stroke="#333" stroke-width="1.100" stroke-dasharray=".8 1.600"/><path d="M939.7 342.7L1013.3 341.8" stroke="#333" stroke-width="1.100" stroke-dasharray=".8 2.200"/><path d="M893.1 362.0L901.7 341.0L909.0 341.8L899.5 363.6Z" fill="#4a4a4a" stroke="#222" stroke-width="0.8"/><path d="M895.8 360.7L904.1 342.7" stroke="#ddd" stroke-width="1.200" stroke-dasharray="1 1.500"/><path d="M906.8 344.9C908.0 343.3 910.2 336.3 914.0 335.0C917.8 333.7 925.9 335.6 929.8 337.2C933.7 338.9 937.0 341.8 937.5 344.9C938.1 348.0 935.5 353.0 933.1 355.9C930.7 358.8 927.4 361.7 923.2 362.5C919.0 363.2 911.1 361.9 907.9 360.3C904.6 358.6 903.6 355.2 903.5 352.6C903.3 350.0 906.2 346.2 906.8 344.9Z" fill="#fff" stroke="#222" stroke-width="1.200"/><path d="M906.1 347.5L909.6 344.9L908.7 350.4" fill="none" stroke="#333" stroke-width="0.8"/><path d="M894.7 365.1C897.6 365.8 906.4 367.9 912.2 369.1C918.1 370.2 922.5 371.3 929.8 372.1C937.1 373.0 947.4 374.4 956.2 374.3C965.0 374.3 974.8 372.8 982.5 371.7C990.2 370.6 996.4 369.1 1002.3 367.8C1008.2 366.4 1015.1 364.1 1017.7 363.4" fill="none" stroke="#222" stroke-width="1.800"/><path d="M914.4 366.9C917.7 367.3 927.3 368.8 934.2 369.5C941.2 370.2 948.9 370.9 956.2 370.8C963.5 370.8 971.5 369.9 978.1 369.1C984.7 368.3 992.8 366.5 995.7 366.0" fill="none" stroke="#999" stroke-width=".8"/><circle cx="913.3" cy="297.7" r=".7" fill="#555"/><circle cx="1025.4" cy="331.1" r=".8" fill="#555"/></svg><!--/FIG-->
<div class="cap" style="left:434px;top:284.2px">Рис. 11. Коечный штык</div>
</div>
<div class="abs" style="left:1342px;top:98px;width:3px;height:612px;background:#c9c6b7"></div>
<!-- scrollbar -->
<div class="abs" style="left:1345px;top:98px;width:17px;height:612px;background:linear-gradient(to right,#eeede5,#fefefb 30%,#fefefb 70%,#f0efe8)"></div>
<div class="abs sbtn" style="left:1347px;top:100px"></div>
<svg class="abs" style="left:1349px;top:104px" width="9" height="6" viewBox="0 0 9 6"><path d="M.5 5.500l4-4 4 4" fill="none" stroke="#4d6185" stroke-width="2"/></svg>
<div class="abs sbtn" style="left:1347px;top:694px"></div>
<svg class="abs" style="left:1349px;top:699px" width="9" height="6" viewBox="0 0 9 6"><path d="M.5 .5l4 4 4-4" fill="none" stroke="#4d6185" stroke-width="2"/></svg>
<div class="abs" style="left:1347px;top:217px;width:13px;height:7px;border-radius:2px;background:#c1d2fb;border:1px solid #b0c4f4;box-sizing:border-box;box-shadow:0 1px 0 #8ea3d8"></div>

<!-- STATUS BAR -->
<div class="abs" style="left:0;top:713px;width:1366px;height:25px;background:linear-gradient(to bottom,#fbfaf7 0%,#f3f1e9 25%,#efede3 70%,#e6e3d5 100%)"></div>
<div class="abs" style="left:0;top:712px;width:351px;height:2px;background:#f7f6f0"></div>
<svg class="abs" style="left:7px;top:718px" width="16" height="15" viewBox="0 0 16 15"><defs><linearGradient id="sg" x1="0" x2="1"><stop offset="0" stop-color="#f4f4f4"/><stop offset=".5" stop-color="#e0e0e0"/><stop offset=".55" stop-color="#8c8c8c"/><stop offset="1" stop-color="#b8b8b8"/></linearGradient></defs><rect x=".5" y=".5" width="15" height="14" fill="url(#sg)" stroke="#7a7a7a"/><path d="M6.500 3.500L2.500 7.500l4 4z" fill="#333"/></svg>
<svg class="abs" style="left:572px;top:718px" width="230" height="16" viewBox="0 0 230 16"><defs><linearGradient id="ng" x1="0" x2="1" y1="0" y2="1"><stop offset="0" stop-color="#e4ecfa"/><stop offset="1" stop-color="#7f9fd8"/></linearGradient><linearGradient id="gg" x1="0" x2="0" y1="0" y2="1"><stop offset="0" stop-color="#7fd47a"/><stop offset="1" stop-color="#2a9a34"/></linearGradient></defs>
<rect x=".5" y=".5" width="3" height="15" fill="url(#ng)" stroke="#8aa4d8"/><path d="M16 .5L5.500 8 16 15.500z" fill="url(#ng)" stroke="#8aa4d8"/>
<path d="M35 .5L26.500 8 35 15.500z" fill="url(#ng)" stroke="#8aa4d8"/>
<path d="M136 .5L144.500 8 136 15.500z" fill="url(#ng)" stroke="#8aa4d8"/>
<path d="M153 .5L163.500 8 153 15.500z" fill="url(#ng)" stroke="#8aa4d8"/><rect x="164.500" y=".500" width="3" height="15" fill="url(#ng)" stroke="#8aa4d8"/>
<path d="M182.500 8l7.500-6.500v3.500h8v6h-8v3.500z" fill="url(#gg)" stroke="#1f7a2a"/>
<path d="M220.500 8l-7.500-6.500v3.500h-8v6h8v3.500z" fill="#8c8c8c" stroke="#6a6a6a"/>
</svg>
<div class="abs" style="left:614px;top:716px;width:86px;height:20px;background:#fff"></div>
<div class="t" style="left:637px;top:718px;letter-spacing:-.3px">15 из 80</div>
<div class="sep" style="left:748px;top:716px;height:20px"></div>
<svg class="abs" style="left:1269px;top:716px" width="19" height="18" viewBox="0 0 19 18"><path d="M.5 .5h7l3 3v9h-10z" fill="#e8effa" stroke="#9ab0d8"/><circle cx="12" cy="11" r="4.200" fill="#fff" stroke="#000"/><path d="M12 6.800a4.200 4.200 0 0 0 0 8.400z" fill="#000"/><path d="M12 4.500v13M5.500 11h13M7.400 6.400l9.200 9.200M16.600 6.400l-9.200 9.200" stroke="#000" stroke-width="1" stroke-dasharray="1.600 10"/></svg>
<div class="abs" style="left:1296px;top:715px;width:22px;height:22px;box-sizing:border-box;border:1px solid #4a66b4;background:#dde3ee"></div>
<svg class="abs" style="left:1299px;top:718px" width="16" height="16" viewBox="0 0 16 16"><rect x=".5" y=".5" width="15" height="15" fill="#dce8fa" stroke="#5f7fc0"/><path d="M3.500 15.500v-12h7l2 2v10" fill="#c3d6f4" stroke="#6f8fc8"/></svg>
<svg class="abs" style="left:1321px;top:718px" width="16" height="16" viewBox="0 0 16 16"><rect x=".5" y=".5" width="15" height="15" fill="#e6eefa" stroke="#8fa8d8"/><path d="M8 0v16M0 8h16" stroke="#8fa8d8"/><path d="M.5 15.500v-5h4l1.500 1.500v3.500zM9.500 15.500v-5h4l1.500 1.500v3.500z" fill="#c3d6f4" stroke="#7f9ad0" stroke-width=".8"/></svg>
<svg class="abs" style="left:1343px;top:718px" width="16" height="16" viewBox="0 0 16 16"><rect x=".5" y=".5" width="15" height="15" fill="#e6eefa" stroke="#8fa8d8"/><path d="M8 0v16M0 8h16" stroke="#8fa8d8"/><rect x="1" y="1" width="6.500" height="6.500" fill="#d4d4d4"/><path d="M.5 15.500v-5h4l1.500 1.500v3.500z" fill="#c3d6f4" stroke="#7f9ad0" stroke-width=".8"/></svg>
<!-- TASKBAR -->
<div id="taskbar" class="abs"></div>
<!-- start button -->
<div class="abs" style="left:0;top:738px;width:96px;height:30px;border-radius:0 9px 9px 0/0 14px 14px 0;border-top:1px solid #2a7a2a;box-sizing:border-box;background:linear-gradient(to bottom,#3f9a3c 0%,#5fbf5a 8%,#3fa53c 18%,#36983a 45%,#2f8f35 75%,#2a7f30 92%,#256f2b 100%);box-shadow:inset -3px 0 5px rgba(0,40,0,.35), 2px 0 3px rgba(0,20,90,.5)"></div>
<svg class="abs" style="left:10px;top:743px" width="21" height="20" viewBox="0 0 20 19"><path d="M2.500 2.500q3.500-2 6.500 0l-1.500 6q-3-1.800-6.500 0z" fill="#f0562a"/><path d="M10.500 3q3.500 2 7 .5l-1.500 6q-3.500 1.500-7-.5z" fill="#7cc243"/><path d="M.8 10q3.500-2 6.500 0l-1.500 6q-3-1.800-6.500 0z" fill="#3e8ee8"/><path d="M8.800 10.500q3.500 2 7 .5l-1.500 6q-3.500 1.500-7-.5z" fill="#fbc52c"/></svg>
<div class="t" id="pusk" style="left:35px;top:741px;transform:scaleX(.9);font-size:19px;line-height:22px;font-weight:bold;font-style:italic;color:#fff;text-shadow:1px 1px 1px #1a4a1a">пуск</div>
<!-- quick launch -->
<svg class="abs" style="left:108px;top:744px" width="18" height="18" viewBox="0 0 18 18"><circle cx="9" cy="9.500" r="6" fill="none" stroke="#3b9ce8" stroke-width="3"/><rect x="6" y="8.500" width="10" height="2" fill="#3b9ce8"/><rect x="11" y="10.500" width="6" height="3" fill="#2a63d6"/><path d="M1 14Q3 3 16 2.500Q6 5 3.500 15z" fill="#f2c12e"/></svg>
<svg class="abs" style="left:130px;top:744px" width="18" height="18" viewBox="0 0 18 18"><circle cx="8.500" cy="9.500" r="7" fill="#2a62c8"/><rect x="4" y="5" width="9" height="9" rx="1" fill="#fff"/><path d="M6 7.500h5M6 9.500h5M6 11.500h3" stroke="#2a62c8" stroke-width="1.200"/><path d="M10 9l6-6 1.500 1.500-6 6z" fill="#e8a52a" stroke="#7a4a10" stroke-width=".5"/></svg>
<svg class="abs" style="left:153px;top:744px" width="17" height="18" viewBox="0 0 17 18"><path d="M1 1h13l2 2v14H1z" fill="#2b3f9e"/><rect x="4" y="1" width="8" height="5" fill="#e8e8f0"/><rect x="9" y="2" width="2" height="3" fill="#2b3f9e"/><rect x="3" y="8" width="11" height="8" fill="#fff"/><rect x="3" y="10.500" width="11" height="2.500" fill="#e03a3a"/><rect x="3" y="14.500" width="11" height="1.500" fill="#e03a3a"/></svg>
<svg class="abs" style="left:176px;top:744px" width="18" height="18" viewBox="0 0 18 18"><circle cx="9" cy="9" r="8" fill="#e8453a"/><path d="M9 9L1.500 6A8 8 0 0 0 7 16.800z" fill="#3aa858"/><path d="M9 9l-2 7.800A8 8 0 0 0 16.700 6.500z" fill="#f7c82a"/><circle cx="9" cy="9" r="3.800" fill="#fff"/><circle cx="9" cy="9" r="2.900" fill="#4a8af0"/></svg>
<svg class="abs" style="left:199px;top:744px" width="18" height="18" viewBox="0 0 18 18"><rect x=".5" y=".5" width="17" height="17" fill="#3f7ab8" stroke="#0f2a5a"/><path d="M9 1v16" stroke="#9fd0f0"/><path d="M1 1l8 8-8 8zM17 1L9 9l8 8z" fill="#6fa8e0" opacity=".55"/><rect x="1" y="6" width="16" height="6" fill="#1f4f8a" opacity=".75"/><text x="9" y="11.300" font-family="Liberation Sans,sans-serif" font-size="6" font-weight="bold" fill="#e8f2ff" text-anchor="middle">KMP</text></svg>
<svg class="abs" style="left:223px;top:744px" width="18" height="18" viewBox="0 0 18 18"><circle cx="9" cy="9" r="8.200" fill="#2a4f98"/><circle cx="9" cy="9" r="7" fill="#f2f5fb"/><path d="M11 2.500L5.500 10h3L7 15.500 12.500 8h-3z" fill="#2a5cc0"/></svg>
<svg class="abs" style="left:246px;top:744px" width="17" height="18" viewBox="0 0 17 18"><ellipse cx="8.500" cy="9" rx="7.500" ry="8.500" fill="#d6121a"/><ellipse cx="8.500" cy="9" rx="3" ry="6" fill="#2a63d6"/><ellipse cx="8.500" cy="9" rx="3" ry="6" fill="#f4e8e8" opacity=".85"/></svg>
<svg class="abs" style="left:268px;top:744px" width="18" height="18" viewBox="0 0 18 18"><circle cx="9" cy="9" r="8.300" fill="#fff"/><circle cx="9" cy="9" r="7" fill="#2fa23c"/><path d="M5.500 5v5q0 3 3.500 3t3.500-3V5M9 13v2" fill="none" stroke="#fff" stroke-width="1.800"/></svg>
<!-- task buttons -->
<div class="abs tb" style="left:313px;width:158px"></div>
<svg class="abs" style="left:321px;top:745px" width="17" height="17" viewBox="0 0 17 17"><ellipse cx="8.500" cy="8.500" rx="7.500" ry="8" fill="#d6121a"/><ellipse cx="8.500" cy="8.500" rx="2.800" ry="5.500" fill="#f4dede"/></svg>
<div class="t tbt" id="tb1" style="left:342px;letter-spacing:.1px">Opera 12.14 (1738): ...</div>
<div class="abs tb" style="left:473px;width:158px"></div>
<svg class="abs" style="left:482px;top:746px" width="17" height="14" viewBox="0 0 17 14"><path d="M.5 13.500V2l1.500-1.500h4L7.500 2H14v3" fill="#f3dc6a" stroke="#a88a2a"/><path d="M.5 13.500L3 5h13.500l-2.500 8.500z" fill="#fbe98a" stroke="#a88a2a"/></svg>
<div class="t tbt" id="tb2" style="left:502px;letter-spacing:.07px">Морские узлы (Л.Н. ...</div>
<div class="abs tb" style="left:633px;width:158px"></div>
<svg class="abs" style="left:641px;top:745px" width="17" height="17" viewBox="0 0 17 17"><path d="M1 2l9-1.500 5 2.500v11l-9 2.500L1 14z" fill="#d8d4c4" stroke="#222"/><path d="M3 4.500l6-1v9l-6 1z" fill="#2a2a9a"/><path d="M5 7.500q2-2 3 1t-3 1z" fill="#e8e8ff"/><path d="M10 .5l5 2.500v11l-5 2.500z" fill="#8a8678" stroke="#222"/></svg>
<div class="t tbt" id="tb3" style="left:662px;transform:scaleX(.89)">МОРСКИЕ ПРОГРАММЫ</div>
<div class="abs tb act" style="left:793px;width:159px"></div>
<svg class="abs" style="left:803px;top:745px" width="17" height="17" viewBox="0 0 17 17"><path d="M1 9l8-5 7 4-8 6z" fill="#3a9ad8"/><path d="M1 9v2l7 5v-2z" fill="#1f5f9a"/><circle cx="6.500" cy="5.500" r="4.200" fill="#f0c8d8" stroke="#888" stroke-width="1.200"/><path d="M9.500 8.500l5 5" stroke="#d86a2a" stroke-width="2.200"/></svg>
<div class="t tbt" id="tb4" style="left:822px;letter-spacing:.07px">Морские узлы Л.Н. ...</div>
<!-- tray -->
<div class="t tbt" style="left:1130px;transform:scaleX(.85)">EN</div>
<div class="abs" style="left:1166px;top:738px;width:200px;height:30px;background:linear-gradient(to bottom,#0c59b9 0%,#139ee9 9%,#18b5f2 18%,#139dea 40%,#0f8ee4 70%,#0d8ee6 88%,#095bc9 100%);border-left:1px solid #092e51;box-shadow:inset 1px 0 0 #18bbff"></div>
<svg class="abs" style="left:1174px;top:743px" width="146" height="20" viewBox="0 0 146 20"><circle cx="9.500" cy="10" r="8.300" fill="#fff"/><circle cx="9.500" cy="10" r="7" fill="#2fa23c"/><path d="M6 6v5q0 3 3.500 3t3.500-3V6M9.500 14v2" fill="none" stroke="#fff" stroke-width="1.800"/>
<rect x="24" y="3" width="9" height="7" fill="#cfe4fa" stroke="#5a7ab0"/><rect x="19" y="9" width="9" height="7" fill="#cfe4fa" stroke="#5a7ab0"/><path d="M26 17h6M22 18h5" stroke="#ddd" stroke-width="1.500"/>
<circle cx="45.500" cy="10" r="8" fill="#e8701a"/><circle cx="45.500" cy="10" r="4" fill="none" stroke="#fff" stroke-width="2"/><path d="M41 6l4 1-2 3z" fill="#fff"/>
<path d="M56 8q0-4 4-4t3 4l7 1v3h-2v3h-3v-3h-4q-5 0-5-4z" fill="#f2c12e" stroke="#8a6a10" stroke-width=".6"/><path d="M64 17l3.500-7 3.500 7z" fill="#f7e02a" stroke="#333" stroke-width=".6"/>
<path d="M75 7h4l5-4v14l-5-4h-4z" fill="#c0452a" stroke="#5a1a0a" stroke-width=".6"/><path d="M86 5q3 5 0 10M89 3q4 7 0 14" fill="none" stroke="#111" stroke-width="1.200"/>
<path d="M92 3h16v8q-2 6-8 7-6-1-8-7z" fill="#fff" stroke="#aaa" stroke-width=".5"/><path d="M92 3h8v7h-8zM100 10h8q-1 5-8 8z" fill="#e0242a"/>
<circle cx="115" cy="8" r="4.500" fill="#b8b8b8" stroke="#555"/><circle cx="121" cy="11" r="4" fill="#999" stroke="#555"/><circle cx="123" cy="14" r="3.800" fill="#e0242a"/><path d="M120.500 14h5" stroke="#fff" stroke-width="1.400"/>
<rect x="130" y="1" width="15" height="13" fill="#7a7a7a" stroke="#4a5a8a"/><path d="M130 17h6M139 17h6" stroke="#333" stroke-width="2"/></svg>
<div class="t tbt" id="clock" style="left:1325px">22:48</div>

</body>
</html>
